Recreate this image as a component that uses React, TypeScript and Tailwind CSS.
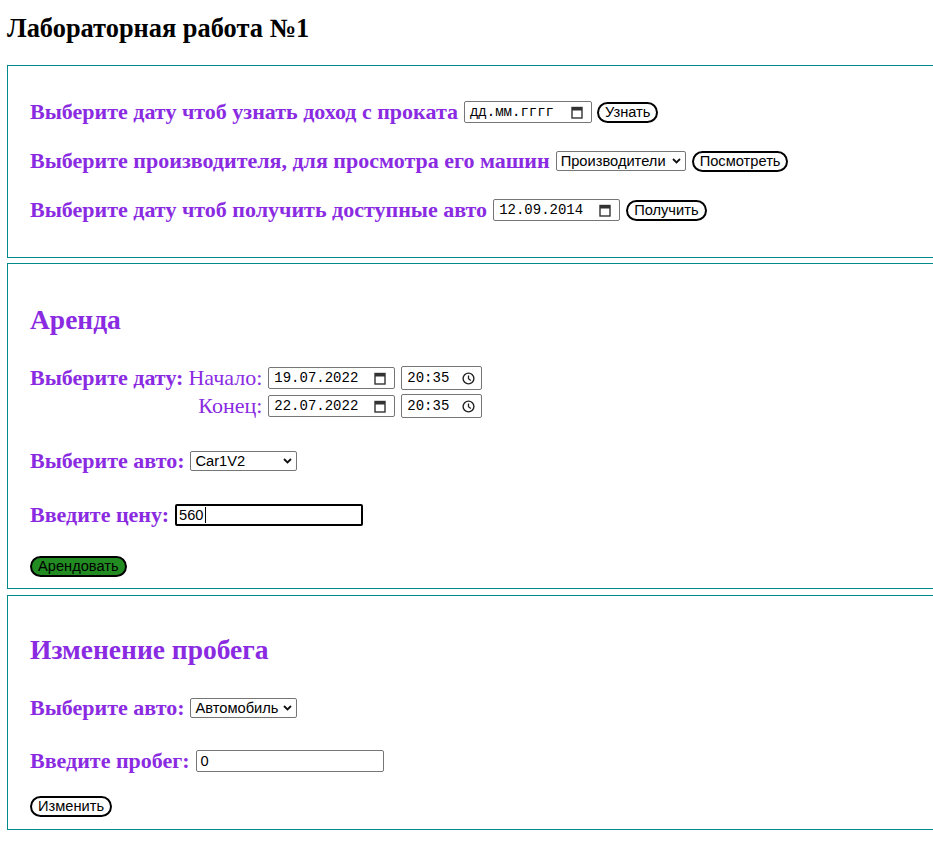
import React from 'react'

const serif = { fontFamily: '"Liberation Serif", "Times New Roman", serif' }

function CalendarIcon() {
  return (
    <svg width="12" height="13" viewBox="0 0 12 13" className="shrink-0">
      <rect x="1" y="1.5" width="10" height="10.5" fill="none" stroke="#333" strokeWidth="1.4" />
      <rect x="1" y="1.5" width="10" height="3" fill="#333" />
    </svg>
  )
}

function ClockIcon() {
  return (
    <svg width="13" height="13" viewBox="0 0 13 13" className="shrink-0">
      <circle cx="6.5" cy="6.5" r="5.4" fill="none" stroke="#222" strokeWidth="1.4" />
      <path d="M6.5 3.4 V6.7 L8.8 8.6" fill="none" stroke="#222" strokeWidth="1.3" />
    </svg>
  )
}

function Chevron() {
  return (
    <svg width="9" height="6" viewBox="0 0 9 6" className="shrink-0">
      <path d="M1 1 L4.5 4.5 L8 1" fill="none" stroke="#111" strokeWidth="1.8" />
    </svg>
  )
}

function DateField({ value, width = 'w-[128px]' }: { value: string; width?: string }) {
  return (
    <div className={`flex h-[22px] ${width} items-center justify-between rounded-[2px] border border-[#767676] bg-white pl-[5px] pr-[8px] font-['Liberation_Mono',monospace] text-[14px] leading-none text-black`}>
      <span>{value}</span>
      <CalendarIcon />
    </div>
  )
}

function TimeField({ value }: { value: string }) {
  return (
    <div className="flex h-[24px] w-[81px] items-center justify-between rounded-[2px] border border-[#767676] bg-white pl-[5px] pr-[6px] font-['Liberation_Mono',monospace] text-[14px] leading-none text-black">
      <span>{value}</span>
      <ClockIcon />
    </div>
  )
}

function SelectBox({ value, width }: { value: string; width: string }) {
  return (
    <div className={`flex h-[20px] ${width} items-center justify-between rounded-[2px] border border-[#767676] bg-white pl-[4px] pr-[4px] font-['Liberation_Sans',Arial,sans-serif] text-[14.67px] leading-none text-black`}>
      <span>{value}</span>
      <Chevron />
    </div>
  )
}

function Btn({ children, green = false }: { children: React.ReactNode; green?: boolean }) {
  return (
    <button
      className={`h-[21px] rounded-full border-2 border-black px-[6px] font-['Liberation_Sans',Arial,sans-serif] text-[14.67px] leading-none text-black ${green ? 'bg-[#228b22]' : 'bg-white'}`}
    >
      {children}
    </button>
  )
}

function Label({ children }: { children: React.ReactNode }) {
  return <span className="text-[22px] font-bold leading-[24px] text-[#8a2be2]">{children}</span>
}

export default function App() {
  return (
    <div className="min-h-screen overflow-hidden bg-white pb-[22px]" style={serif}>
      <h1 className="pl-[7px] pt-[14px] text-[26.4px] font-bold leading-[28px] text-black">Лабораторная работа №1</h1>

      {/* Отчёты */}
      <div className="ml-[7px] mt-[23px] w-[1000px] border border-[#008b8b] px-[22px] pt-[34px] pb-[35px]">
        <div className="flex flex-col gap-[25px]">
          <div className="flex h-[24px] items-center">
            <Label>Выберите дату чтоб узнать доход с проката</Label>
            <div className="ml-[6px]"><DateField value="дд.мм.гггг" /></div>
            <div className="ml-[5px] flex"><Btn>Узнать</Btn></div>
          </div>
          <div className="flex h-[24px] items-center">
            <Label>Выберите производителя, для просмотра его машин</Label>
            <div className="ml-[6px]"><SelectBox value="Производители" width="w-[130px]" /></div>
            <div className="ml-[6px] flex"><Btn>Посмотреть</Btn></div>
          </div>
          <div className="flex h-[24px] items-center">
            <Label>Выберите дату чтоб получить доступные авто</Label>
            <div className="ml-[6px]"><DateField value="12.09.2014" width="w-[127px]" /></div>
            <div className="ml-[6px] flex"><Btn>Получить</Btn></div>
          </div>
        </div>
      </div>

      {/* Аренда */}
      <div className="ml-[7px] mt-[5px] w-[1000px] border border-[#008b8b] px-[22px] pt-[41px] pb-[11px]">
        <h2 className="h-[30px] text-[27.5px] font-bold leading-[30px] text-[#8a2be2]">Аренда</h2>
        <div className="mt-[31px] flex items-start">
          <span className="flex h-[24px] items-center"><Label>Выберите дату:</Label></span>
          <div className="ml-[5px] grid grid-cols-[auto_auto_auto] grid-rows-[24px_24px] items-center gap-x-[6px] gap-y-[4px]">
            <span className="text-right text-[22px] leading-[24px] text-[#8a2be2]">Начало:</span>
            <DateField value="19.07.2022" width="w-[127px]" />
            <TimeField value="20:35" />
            <span className="text-right text-[22px] leading-[24px] text-[#8a2be2]">Конец:</span>
            <DateField value="22.07.2022" width="w-[127px]" />
            <TimeField value="20:35" />
          </div>
        </div>
        <div className="mt-[31px] flex h-[24px] items-center">
          <Label>Выберите авто:</Label>
          <div className="ml-[6px]"><SelectBox value="Car1V2" width="w-[107px]" /></div>
        </div>
        <div className="mt-[30px] flex h-[24px] items-center">
          <Label>Введите цену:</Label>
          <div className="ml-[6px] flex h-[22px] w-[188px] items-center rounded-[2px] border-2 border-black pl-[2px] font-['Liberation_Sans',Arial,sans-serif] text-[14.67px] leading-none text-black">
            560<span className="ml-px inline-block h-[16px] w-px bg-black" />
          </div>
        </div>
        <div className="mt-[29px] flex"><Btn green>Арендовать</Btn></div>
      </div>

      {/* Изменение пробега */}
      <div className="ml-[7px] mt-[6px] w-[1000px] border border-[#008b8b] px-[22px] pt-[39px] pb-[12px]">
        <h2 className="h-[30px] text-[27.5px] font-bold leading-[30px] text-[#8a2be2]">Изменение пробега</h2>
        <div className="mt-[31px] flex h-[24px] items-center">
          <Label>Выберите авто:</Label>
          <div className="ml-[6px]"><SelectBox value="Автомобиль" width="w-[107px]" /></div>
        </div>
        <div className="mt-[29px] flex h-[24px] items-center">
          <Label>Введите пробег:</Label>
          <div className="ml-[6px] flex h-[22px] w-[188px] items-center rounded-[2px] border border-[#767676] pl-[4px] font-['Liberation_Sans',Arial,sans-serif] text-[14.67px] leading-none text-black">
            0
          </div>
        </div>
        <div className="mt-[23px] flex"><Btn>Изменить</Btn></div>
      </div>
    </div>
  )
}
